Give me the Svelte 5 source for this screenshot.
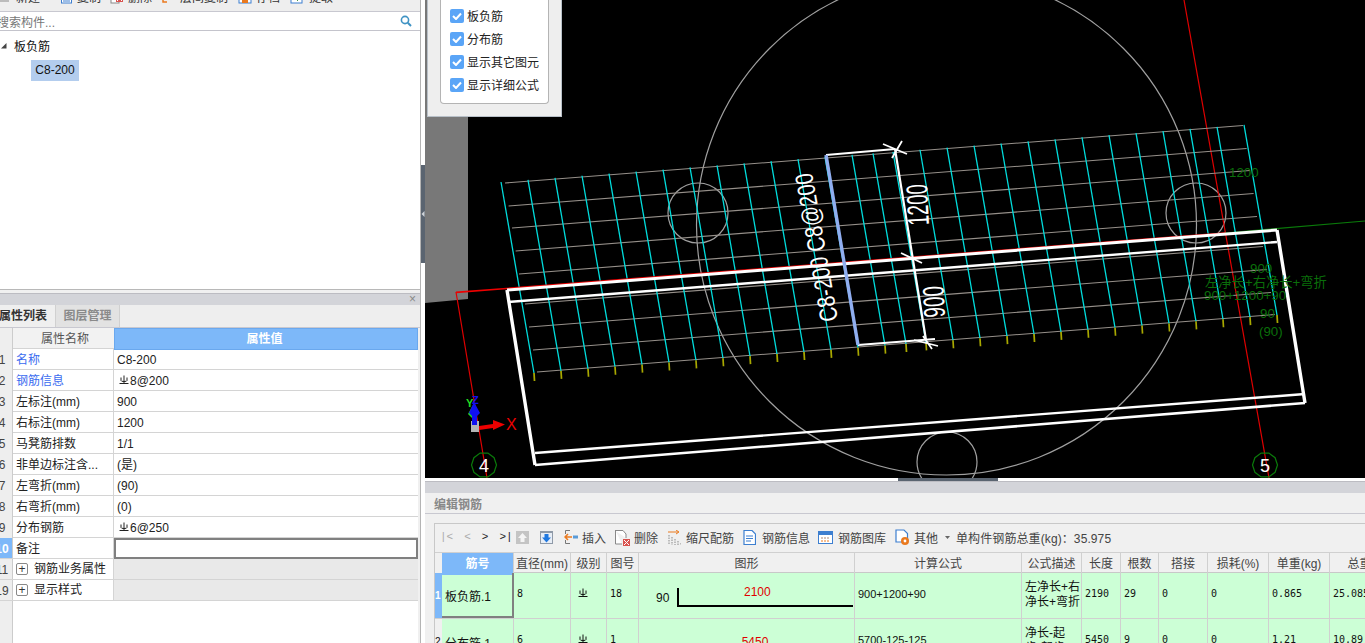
<script>
	const bottoms = [];
	for (let i = 0; i <= 10; i++) bottoms.push(534 + 27 * i);
	bottoms.push(831, 858, 885, 906, 926);
	for (let i = 0; i <= 12; i++) bottoms.push(953 + 27 * i);
	const bars = bottoms.map((x) => ({
		x1: x - 33,
		y1: 182 - 0.077 * (x - 534),
		x2: x,
		y2: 373 - 0.078 * (x - 534)
	}));
	const rows = [
		[505, 183], [508.6, 206], [512, 228], [515.6, 251], [519, 274],
		[525, 304], [529, 327], [533, 350], [537, 372]
	];

	// 轴号圆圈
	const ring = (cx, cy) => {
		const pts = [];
		for (let i = 0; i < 10; i++) {
			const a = (Math.PI * 2 * i) / 10;
			pts.push(`${(cx + 12.5 * Math.cos(a)).toFixed(1)},${(cy + 12.5 * Math.sin(a)).toFixed(1)}`);
		}
		return pts.join(' ');
	};

	const props = [
		{ n: '1', name: '名称', val: 'C8-200', blue: true },
		{ n: '2', name: '钢筋信息', val: '8@200', blue: true, sym: true },
		{ n: '3', name: '左标注(mm)', val: '900' },
		{ n: '4', name: '右标注(mm)', val: '1200' },
		{ n: '5', name: '马凳筋排数', val: '1/1' },
		{ n: '6', name: '非单边标注含...', val: '(是)' },
		{ n: '7', name: '左弯折(mm)', val: '(90)' },
		{ n: '8', name: '右弯折(mm)', val: '(0)' },
		{ n: '9', name: '分布钢筋', val: '6@250', sym: true }
	];
	const checks = ['板负筋', '分布筋', '显示其它图元', '显示详细公式'];
	const heads = ['直径(mm)', '级别', '图号', '图形', '计算公式', '公式描述', '长度', '根数', '搭接', '损耗(%)', '单重(kg)', '总重'];
</script>

{#snippet rebar()}
	<svg class="sym" width="10" height="10" viewBox="0 0 10 10" fill="none" stroke="currentColor">
		<path d="M0.5 8.5H9.5M5 0.5V8.5M2 2.5V5.5Q2 6.5 5 6.5Q8 6.5 8 5.5V2.5" />
	</svg>
{/snippet}

<div class="app">
	<aside class="left">
		<div class="top-tools">
			<span class="tool t0">
				<svg width="12" height="12"><path d="M-1 3H9M-1 6H9M-1 9H9" stroke="#8a8a8a" /></svg>新建
			</span>
			<span class="tool t1">
				<svg width="13" height="12"><rect x="1.5" y="0" width="10" height="11" fill="#fff" stroke="#3d7fd0" /><path d="M3 3H10M3 6H10M3 9H10" stroke="#3d7fd0" /></svg>复制
			</span>
			<span class="tool t2">
				<svg width="14" height="12"><rect x="1" y="0" width="8" height="11" fill="#fff" stroke="#888" /><rect x="6" y="3" width="7" height="7" fill="#d9534f" /><path d="M7 4L12 9M12 4L7 9" stroke="#fff" /></svg>删除
			</span>
			<span class="tool t3">
				<svg width="14" height="12"><path d="M1 0V10H5M5 0V6H13" stroke="#ea7a1f" stroke-width="1.5" fill="none" /></svg>层间复制
			</span>
			<span class="tool t4">
				<svg width="14" height="12"><rect x="1" y="0" width="12" height="11" fill="#fff" stroke="#3d7fd0" /><rect x="4" y="5" width="6" height="6" fill="#ea7a1f" /></svg>存档
			</span>
			<span class="tool t5">
				<svg width="15" height="12"><rect x="1" y="0" width="11" height="11" fill="#fff" stroke="#3d7fd0" /><path d="M7 9L13 3M10 2.5H14V6.5" stroke="#4a9a4a" fill="none" /></svg>提取
			</span>
		</div>

		<div class="search">
			<span class="hint">搜索构件...</span>
			<svg width="12" height="12" viewBox="0 0 12 12" fill="none" stroke="#3f93c4" stroke-width="1.6">
				<circle cx="5" cy="5" r="3.6" />
				<path d="M7.8 7.8L11 11" stroke-width="2" />
			</svg>
		</div>

		<div class="tree">
			<div class="node">
				<svg width="6" height="6"><path d="M0 5.5L5.5 0V5.5Z" fill="#444" /></svg>
				<span>板负筋</span>
			</div>
			<div class="leaf">C8-200</div>
		</div>

		<div class="pane-head"><span class="close">×</span></div>
		<div class="tabs">
			<div class="tab active">属性列表</div>
			<div class="tab">图层管理</div>
		</div>

		<div class="props">
			<div class="prow phead">
				<div class="num"></div>
				<div class="pname">属性名称</div>
				<div class="pval">属性值</div>
			</div>
			{#each props as p}
				<div class="prow">
					<div class="num"><span>{p.n}</span></div>
					<div class="pname" class:blue={p.blue}>{p.name}</div>
					<div class="pval">
						{#if p.sym}{@render rebar()}{/if}{p.val}
					</div>
				</div>
			{/each}
			<div class="prow">
				<div class="num on"><span>10</span></div>
				<div class="pname">备注</div>
				<div class="pval editing"></div>
			</div>
			<div class="prow">
				<div class="num"><span>11</span></div>
				<div class="pname group"><i class="plus">+</i>钢筋业务属性</div>
				<div class="pval shade"></div>
			</div>
			<div class="prow">
				<div class="num"><span>19</span></div>
				<div class="pname group"><i class="plus">+</i>显示样式</div>
				<div class="pval shade"></div>
			</div>
			<div class="fill"><div class="num"></div></div>
		</div>
	</aside>

	<div class="splitter">
		<div class="grip"><svg width="4" height="8"><path d="M3.5 1L0.5 4L3.5 7Z" fill="#cfd3d8" /></svg></div>
	</div>

	<main class="right">
		<div class="canvas">
			<svg class="drawing" width="940" height="478" viewBox="425 0 940 478">
				<rect x="425" y="0" width="940" height="478" fill="#000" />
				<path d="M425 303L468 299V0H425Z" fill="#787878" />

				<circle cx="946.5" cy="225" r="250" fill="none" stroke="#a0a0a0" stroke-width="1.2" />
				<circle cx="698" cy="213" r="30" fill="none" stroke="#a0a0a0" stroke-width="1.2" />
				<circle cx="1196" cy="213" r="30" fill="none" stroke="#a0a0a0" stroke-width="1.2" />
				<circle cx="947" cy="462" r="30" fill="none" stroke="#a0a0a0" stroke-width="1.2" />

				<path d="M456 292L487 478M1184 0L1269 478" stroke="#e00000" stroke-width="1.2" fill="none" />
				<path d="M1225 233L1365 221" stroke="#0a7a0a" stroke-width="1.2" />

				{#each rows as r}
					<line x1={r[0]} y1={r[1]} x2={r[0] + 738} y2={r[1] - 57.5} stroke="#96908a" stroke-width="1.1" />
				{/each}
				{#each bars as b}
					<line x1={b.x1} y1={b.y1} x2={b.x2} y2={b.y2} stroke="#00dcdc" stroke-width="1.3" />
					<line x1={b.x2} y1={b.y2} x2={b.x2 + 0.5} y2={b.y2 + 8} stroke="#a8a800" stroke-width="1.7" />
				{/each}

				<path d="M456 292.4L1225 233" stroke="#ee0000" stroke-width="1.6" />
				<path d="M507 290L1277 230" stroke="#fff" stroke-width="3" />
				<path d="M508 302L1277 242" stroke="#fff" stroke-width="2.4" />
				<path d="M535 453L1305 394" stroke="#fff" stroke-width="2.4" />
				<path d="M535 465L1305 403" stroke="#fff" stroke-width="2.6" />
				<path d="M507 290L535 465M1277 230L1305 403" stroke="#fff" stroke-width="3.4" fill="none" />

				<!-- 标注 -->
				<path d="M826 155L895 149M858 345L935 339" stroke="#fff" stroke-width="2.2" />
				<path d="M826 155L858 345" stroke="#90aef0" stroke-width="3.4" />
				<path d="M895 149L926 340" stroke="#fff" stroke-width="2.2" />
				<path d="M883 144L907 154M902 141L892 158M901 253L922 263M914 340L938 346M923 336L932 349" stroke="#fff" stroke-width="1.8" />
				<text class="dim" transform="translate(838 320) rotate(-100) scale(.8 1)">C8-200 C8@200</text>
				<text class="dim big" transform="translate(929 225) rotate(-93) scale(.62 1)">1200</text>
				<text class="dim big" transform="translate(945 317) rotate(-93) scale(.63 1)">900</text>

				<!-- 轴号 -->
				<polygon points={ring(484, 465)} fill="none" stroke="#0a7a0a" stroke-width="1.2" />
				<text class="bubble" x="479" y="472">4</text>
				<polygon points={ring(1265, 465)} fill="none" stroke="#0a7a0a" stroke-width="1.2" />
				<text class="bubble" x="1260" y="472">5</text>

				<!-- 绿色说明 -->
				<text class="note" x="1229" y="177">1200</text>
				<text class="note" x="1250" y="273">900</text>
				<text class="note" x="1205" y="287">左净长+右净长+弯折</text>
				<text class="note" x="1204" y="300">900+1200+90</text>
				<text class="note" x="1260" y="318">90</text>
				<text class="note" x="1259" y="336">(90)</text>

				<!-- 坐标轴 -->
				<rect x="471" y="421" width="8" height="11" fill="#b4b4b4" />
				<path d="M479 426L493 424V420L505 424.5L493 430V428L479 430Z" fill="#ee0000" />
				<path d="M473 405L468 414L473 419Z" fill="#22dd22" />
				<path d="M474 402L480 413L477 416V425H472V416L469 413Z" fill="#1010f0" />
				<text class="axis" x="506" y="430" fill="#ee0000">X</text>
				<text class="axis small" x="466" y="407" fill="#22dd22">Y</text>
				<text class="axis small" x="472" y="404" fill="#1010f0">Z</text>
			</svg>

			<div class="layers">
				<div class="layers-box">
					{#each checks as c}
						<label class="check">
							<span class="box">
								<svg width="10" height="8" viewBox="0 0 10 8"><path d="M1 4L4 7L9 1.5" fill="none" stroke="#fff" stroke-width="2" /></svg>
							</span>
							{c}
						</label>
					{/each}
				</div>
			</div>
		</div>

		<div class="hsplit"><div class="hgrip"></div></div>
		<div class="pane-head"></div>
		<div class="edit-title">编辑钢筋</div>

		<div class="edit">
			<div class="grid-wrap">
				<div class="bar">
					<span class="nav">
						<b class="dim1">|&lt;</b><b class="dim1">&lt;</b><b>&gt;</b><b>&gt;|</b>
					</span>
					<svg class="ib up" width="13" height="13"><rect width="13" height="13" fill="#c4c4c4" /><path d="M6.5 2L11 7H8.5V11H4.5V7H2Z" fill="#f4f4f4" /></svg>
					<svg class="ib down" width="13" height="13"><rect width="13" height="13" fill="#8f9aa8" /><rect x="1" y="2" width="11" height="10" fill="#e8eef6" /><path d="M6.5 11.5L11 6.5H8.5V3H4.5V6.5H2Z" fill="#1f78e0" /></svg>
					<span class="cmd c-ins">
						<svg width="14" height="16"><path d="M6 1.5H1.5V5M1.5 11V14.5H6" stroke="#777" fill="none" /><path d="M8 8H1M4 5L1 8L4 11" stroke="#ea7a1f" stroke-width="1.5" fill="none" /><rect x="9" y="6.5" width="5" height="3" fill="#5a9bd8" /></svg>
						插入
					</span>
					<span class="cmd c-del">
						<svg width="16" height="17"><path d="M1 1.5H9L12 5V9M1.5 1.5V15H8" stroke="#888" fill="#fff" /><rect x="9" y="10" width="7" height="7" fill="#d9534f" /><path d="M10 11L15 16M15 11L10 16" stroke="#fff" /></svg>
						删除
					</span>
					<span class="cmd c-scale">
						<svg width="13" height="15"><path d="M0 2H10M8 0L11 2L8 4" stroke="#ea7a1f" fill="none" /><path d="M1 5V15M4 7V15M7 9V15M10 11V15M13 13V15" stroke="#888" stroke-dasharray="1.5 1" /></svg>
						缩尺配筋
					</span>
					<span class="cmd c-info">
						<svg width="13" height="15"><path d="M1 .5H9L12.5 4V14.5H1Z" fill="#fff" stroke="#3d7fd0" stroke-width="1.2" /><path d="M3 6H10M3 8.5H10M3 11H8" stroke="#3d7fd0" /></svg>
						钢筋信息
					</span>
					<span class="cmd c-lib">
						<svg width="15" height="13"><rect x=".5" y=".5" width="14" height="12" fill="#fff" stroke="#3d7fd0" /><rect x="1" y="1" width="13" height="3" fill="#3d7fd0" /><path d="M3 7H12" stroke="#a87" stroke-dasharray="2 1" /><path d="M3 10H12" stroke="#ea7a1f" stroke-dasharray="2 1" /></svg>
						钢筋图库
					</span>
					<span class="cmd c-other">
						<svg width="15" height="17"><path d="M1 1H9L12.5 4.5V13H1Z" fill="#fff" stroke="#3d7fd0" stroke-width="1.2" /><circle cx="10" cy="12" r="4" fill="#ea7a1f" /><circle cx="10" cy="12" r="1.4" fill="#fff" /></svg>
						其他
						<svg class="caret" width="5" height="3"><path d="M0 0H5L2.5 3Z" fill="#666" /></svg>
					</span>
					<span class="total">单构件钢筋总重(kg)：35.975</span>
				</div>

				<div class="grow ghead">
					<div class="gnum"></div>
					<div class="gcell code-h">筋号</div>
					{#each heads as h}<div class="gcell">{h}</div>{/each}
				</div>

				<div class="grow gdata">
					<div class="gnum on">1</div>
					<div class="gcell code-cell sel">板负筋.1</div>
					<div class="gcell mono">8</div>
					<div class="gcell mono">{@render rebar()}</div>
					<div class="gcell mono">18</div>
					<div class="gcell shape">
						<span class="leg">90</span>
						<div class="hook"><span>2100</span></div>
					</div>
					<div class="gcell plain">900+1200+90</div>
					<div class="gcell desc">左净长+右<br />净长+弯折</div>
					<div class="gcell mono">2190</div>
					<div class="gcell mono">29</div>
					<div class="gcell mono">0</div>
					<div class="gcell mono">0</div>
					<div class="gcell mono">0.865</div>
					<div class="gcell mono">25.085</div>
				</div>

				<div class="grow gdata">
					<div class="gnum">2</div>
					<div class="gcell code-cell">分布筋.1</div>
					<div class="gcell mono">6</div>
					<div class="gcell mono">{@render rebar()}</div>
					<div class="gcell mono">1</div>
					<div class="gcell shape"><span class="red">5450</span></div>
					<div class="gcell plain">5700-125-125</div>
					<div class="gcell desc">净长-起<br />步-起步</div>
					<div class="gcell mono">5450</div>
					<div class="gcell mono">9</div>
					<div class="gcell mono">0</div>
					<div class="gcell mono">0</div>
					<div class="gcell mono">1.21</div>
					<div class="gcell mono">10.89</div>
				</div>
			</div>
		</div>
	</main>
</div>

<style>
	:global(body) {
		margin: 0;
		background: #fff;
	}

	.app {
		display: grid;
		grid-template-columns: 421px 4px 940px;
		width: 1365px;
		height: 643px;
		overflow: hidden;
		font: 12px "Liberation Sans", "Noto Sans CJK SC", sans-serif;
		color: #222;
	}

	/* 左侧 */
	.left {
		display: flex;
		flex-direction: column;
		height: 643px;
		overflow: hidden;
		border-right: 1px solid #b4b4b4;
		box-sizing: border-box;
		background: #f0f0f0;
	}

	.top-tools {
		display: flex;
		height: 11px;
		flex: none;
		overflow: hidden;
		align-items: flex-end;
		background: #eeeeee;
		border-bottom: 1px solid #c8c8d0;
	}

	.tool {
		display: flex;
		flex: none;
		align-items: center;
		gap: 4px;
		height: 22px;
		margin-bottom: 2px;
		line-height: 22px;
		color: #333;
	}

	.t0 { width: 60px; padding-left: 4px; box-sizing: border-box; }
	.t1 { width: 50px; }
	.t2 { width: 52px; }
	.t3 { width: 76px; }
	.t4 { width: 52px; }
	.t0 svg { margin-left: -4px; }

	.search {
		display: flex;
		flex: none;
		align-items: center;
		justify-content: space-between;
		height: 18px;
		padding-right: 8px;
		background: #fff;
		border-bottom: 1px solid #c4c4cc;
		color: #777;
	}

	.hint {
		margin-left: -3px;
	}

	.tree {
		flex: none;
		height: 259px;
		margin-bottom: 3px;
		background: #fff;
		border-bottom: 1px solid #b8b8b8;
		box-sizing: border-box;
	}

	.node {
		display: flex;
		align-items: center;
		gap: 7px;
		height: 29px;
		padding-left: 1px;
		color: #111;
	}

	.leaf {
		width: 48px;
		height: 21px;
		margin-left: 31px;
		line-height: 21px;
		text-align: center;
		background: #b3cdee;
		color: #111;
	}

	.pane-head {
		display: flex;
		flex: none;
		justify-content: flex-end;
		align-items: center;
		height: 11px;
		background: #d3d4d9;
		border-top: 1px solid #bcbcc2;
	}

	.close {
		margin-right: 4px;
		font-size: 12px;
		line-height: 11px;
		color: #888;
	}

	.tabs {
		display: flex;
		flex: none;
		height: 23px;
		background: #eeeeee;
		border-bottom: 1px solid #c8c8d0;
		box-sizing: border-box;
		overflow: hidden;
	}

	.tab {
		width: 65px;
		line-height: 22px;
		text-align: center;
		background: #e2e2e2;
		color: #8a8a8a;
		font-weight: 700;
		border-left: 1px solid #d0d0d0;
		border-right: 1px solid #d0d0d0;
		box-sizing: border-box;
	}

	.tab.active {
		width: 58px;
		margin-left: -3px;
		padding-left: 2px;
		text-align: left;
		background: #efefef;
		color: #333;
		border: 0;
	}

	.props {
		display: flex;
		flex-direction: column;
		flex: 1;
		width: 418px;
		background: #fff;
	}

	.prow {
		display: grid;
		grid-template-columns: 13px 101px 304px;
		flex: none;
		height: 21px;
		box-sizing: border-box;
		line-height: 22px;
		border-bottom: 1px solid #d4d4d4;
		color: #222;
	}

	.num {
		display: flex;
		overflow: hidden;
		background: #eeeeee;
		border-right: 1px solid #ccc;
		box-sizing: border-box;
		color: #444;
	}

	/* 序号被左边裁掉一部分 */
	.num span {
		flex: none;
		width: 20px;
		margin-left: -8px;
		text-align: center;
	}

	.num.on {
		background: #7db8f9;
		color: #fff;
		font-weight: 700;
	}

	.pname {
		padding-left: 3px;
		border-right: 1px solid #d4d4d4;
		white-space: nowrap;
		overflow: hidden;
	}

	.pname.blue {
		color: #3a6cf0;
	}

	.pname.group {
		display: flex;
		align-items: center;
	}

	.pval {
		padding-left: 3px;
		white-space: nowrap;
	}

	.phead {
		background: #f2f2f2;
	}

	.phead .pname {
		text-align: center;
		color: #555;
		border-right: 0;
	}

	.phead .pval {
		padding: 0 3px 0 0;
		text-align: center;
		background: #7db8f9;
		color: #fff;
		font-weight: 700;
		border: 1px solid #6aa8ee;
		box-sizing: border-box;
		line-height: 20px;
	}

	.pval.editing {
		border: 2px solid #808080;
		box-sizing: border-box;
		margin-bottom: -1px;
	}

	.pval.shade {
		background: #e9e9e9;
	}

	.plus {
		display: flex;
		flex: none;
		align-items: center;
		justify-content: center;
		width: 12px;
		height: 12px;
		margin-right: 6px;
		box-sizing: border-box;
		border: 1px solid #888;
		border-radius: 2px;
		font-style: normal;
		line-height: 1;
		color: #333;
		background: #fff;
	}

	.fill {
		display: grid;
		grid-template-columns: 13px;
		flex: 1;
	}

	.sym {
		margin: 0 1px 4px 2px;
		vertical-align: middle;
	}

	.splitter {
		background: #fff;
	}

	.grip {
		display: flex;
		align-items: center;
		height: 98px;
		margin-top: 165px;
		background: #5a6470;
	}

	/* 右侧 */
	.right {
		display: flex;
		flex-direction: column;
		height: 643px;
		overflow: hidden;
		background: #f0f0f0;
	}

	.canvas {
		position: relative;
		flex: none;
		height: 478px;
		background: #000;
	}

	.drawing {
		display: block;
	}

	.dim {
		font-size: 25px;
		fill: #fff;
		font-family: "Liberation Sans", sans-serif;
	}

	.dim.big {
		font-size: 30px;
	}

	.bubble {
		font-size: 18px;
		fill: #fff;
	}

	.note {
		font-size: 13.3px;
		fill: #0a6e0a;
	}

	.axis {
		font-size: 16px;
	}

	.axis.small {
		font-size: 11px;
		font-weight: 700;
	}

	.layers {
		position: absolute;
		top: 0;
		left: 2px;
		width: 135px;
		height: 117px;
		padding: 0 12px 12px;
		box-sizing: border-box;
		background: #eeeeee;
		border: 1px solid #b8c0c8;
		border-top: 0;
	}

	.layers-box {
		height: 104px;
		padding: 4px 0 0 9px;
		box-sizing: border-box;
		background: #fff;
		border: 1px solid #b4b4b4;
		border-top: 0;
		border-radius: 0 0 4px 4px;
	}

	.check {
		display: flex;
		align-items: center;
		gap: 3px;
		height: 23px;
		color: #222;
	}

	.box {
		display: flex;
		align-items: center;
		justify-content: center;
		width: 14px;
		height: 14px;
		border-radius: 2px;
		background: #5aa5f7;
	}

	.hsplit {
		flex: none;
		height: 3px;
		background: #fff;
	}

	.hgrip {
		width: 100px;
		height: 3px;
		margin-left: 473px;
		background: #5a6470;
	}

	.edit-title {
		flex: none;
		height: 18px;
		padding: 2px 0 0 9px;
		line-height: 20px;
		color: #888;
		font-weight: 700;
		background: #f0f0f0;
		border-bottom: 1px solid #c8c8d0;
	}

	.edit {
		flex: 1;
		padding: 9px 0 0 9px;
		overflow: hidden;
	}

	.grid-wrap {
		border-top: 1px solid #c8c8c8;
		border-left: 1px solid #c8c8c8;
		width: 940px;
	}

	.bar {
		display: flex;
		align-items: center;
		height: 28px;
		padding-bottom: 2px;
		box-sizing: border-box;
		color: #444;
		white-space: nowrap;
	}

	.nav {
		display: flex;
		width: 73px;
		padding-left: 5px;
		box-sizing: border-box;
		gap: 11px;
		font: 11px "Liberation Mono", monospace;
	}

	.nav b {
		font-weight: 400;
		color: #222;
	}

	.nav b.dim1 {
		color: #aaa;
	}

	.ib {
		flex: none;
	}

	.up { margin: 0 11px 0 8px; }
	.down { margin-right: 11px; }

	.cmd {
		display: flex;
		flex: none;
		align-items: center;
		gap: 4px;
	}

	.c-ins { width: 50px; }
	.c-del { width: 54px; }
	.c-scale { width: 75px; gap: 5px; }
	.c-info { width: 75px; gap: 6px; }
	.c-lib { width: 77px; gap: 5px; }
	.c-other { width: 61px; }
	.caret { margin-left: 3px; }

	.total {
		letter-spacing: 0.1px;
	}

	.grow {
		display: grid;
		grid-template-columns: 7px 72px 57px 36px 32px 216px 167px 60px 39px 38px 49px 61px 61px 60px;
	}

	.ghead {
		height: 21px;
		line-height: 22px;
		color: #444;
		background: #f0f0f0;
		border-top: 1px solid #d0d0d0;
		border-bottom: 1px solid #c8c8c8;
		box-sizing: border-box;
	}

	.ghead .gcell {
		text-align: center;
		white-space: nowrap;
		border-right: 1px solid #d0d0d0;
	}

	.code-h {
		background: #7db8f9;
		color: #fff;
		font-weight: 700;
	}

	.gdata {
		height: 46px;
		background: #ccffd6;
		border-bottom: 1px solid #d0d0d0;
		box-sizing: border-box;
		color: #111;
	}

	.gnum {
		font-size: 10px;
		line-height: 45px;
		overflow: hidden;
		background: #f0f0f0;
	}

	.gnum.on {
		background: #7db8f9;
		color: #fff;
		font-weight: 700;
	}

	.gdata .gcell {
		display: flex;
		align-items: center;
		padding-left: 3px;
		border-right: 1px solid #d0d0d0;
		box-sizing: border-box;
		overflow: hidden;
	}

	.gdata .code-cell {
		padding-top: 2px;
	}

	.gdata .sel {
		border-right: 2px solid #808080;
		border-bottom: 2px solid #808080;
	}

	.gdata .mono {
		font: 10px "DejaVu Sans Mono", monospace;
		padding-bottom: 5px;
	}

	.mono .sym {
		margin: 0 0 0 4px;
	}

	.gdata .plain {
		font-size: 11px;
		padding-bottom: 3px;
	}

	.gdata .desc {
		display: block;
		padding-top: 7px;
		line-height: 15px;
		white-space: nowrap;
	}

	.gdata .shape {
		padding-left: 17px;
	}

	.leg {
		font-size: 12px;
		margin: 4px 8px 0 0;
	}

	.hook {
		width: 156px;
		height: 17px;
		margin-top: 3px;
		padding-right: 18px;
		border-left: 2px solid #000;
		border-bottom: 2px solid #000;
		text-align: center;
		color: #e00000;
		line-height: 8px;
	}

	.red {
		width: 205px;
		text-align: center;
		color: #e00000;
	}
</style>
